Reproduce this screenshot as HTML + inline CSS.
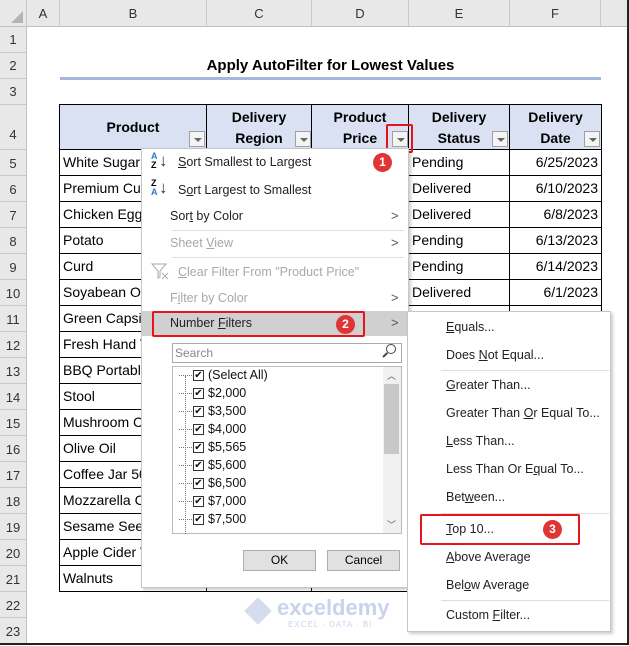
<!DOCTYPE html><html><head><style>
*{margin:0;padding:0;box-sizing:border-box}
body{width:629px;height:645px;position:relative;overflow:hidden;background:#fff;font-family:"Liberation Sans",sans-serif;font-size:13px;color:#000}
.a{position:absolute}
.ch{position:absolute;top:0;height:27px;background:#e8e8e8;border-right:1px solid #c8c8c8;border-bottom:1px solid #c0c0c0;text-align:center;line-height:27px;font-size:13px;color:#333}
.rh{position:absolute;left:0;width:27px;background:#e8e8e8;border-bottom:1px solid #c8c8c8;border-right:1px solid #c0c0c0;text-align:center;font-size:13px;color:#333}
.cell{position:absolute;border-right:1px solid #000;border-bottom:1px solid #000;line-height:25px;padding-left:3px;white-space:nowrap;overflow:hidden;font-size:14px}
.hd{position:absolute;background:#d9e1f2;border-right:1px solid #000;border-bottom:1px solid #000;font-weight:bold;text-align:center;font-size:14px;line-height:21px}
.dd{position:absolute;width:16px;height:16px;border:1px solid #a0a0a0;background:#f4f4f4}
.dd:after{content:"";position:absolute;left:4px;top:6px;border:4px solid transparent;border-top:4px solid #666}
.mi{position:absolute;left:170px;font-size:12.5px;color:#222}
.g{color:#a8a8a8}
.arr{position:absolute;left:391px;font-size:13px;color:#555}
.sep{position:absolute;height:1px;background:#ddd}
.badge{position:absolute;width:19px;height:19px;border-radius:50%;background:#e03535;color:#fff;font-weight:bold;font-size:12px;text-align:center;line-height:19px}
.red{position:absolute;border:2px solid #e8141c;border-radius:2px}
.si{position:absolute;left:446px;font-size:12.5px;color:#222}
.li{position:absolute;left:193px;font-size:12.5px;color:#111;height:16px}
.cb{position:absolute;left:0;top:1px;width:11px;height:11px;border:1px solid #333;background:#fff;font-size:10px;line-height:9px;text-align:center}
.li span.t{position:absolute;left:15px;top:-1px;white-space:nowrap}
.dot{position:absolute;left:-14px;top:6px;width:13px;border-top:1px dotted #777}
</style></head><body>
<div class="ch" style="left:0;width:27px"><div class="a" style="right:3px;bottom:3px;width:0;height:0;border-left:12px solid transparent;border-bottom:12px solid #b5b5b5"></div></div>
<div class="ch" style="left:27px;width:33px">A</div>
<div class="ch" style="left:60px;width:147px">B</div>
<div class="ch" style="left:207px;width:105px">C</div>
<div class="ch" style="left:312px;width:97px">D</div>
<div class="ch" style="left:409px;width:101px">E</div>
<div class="ch" style="left:510px;width:91px">F</div>
<div class="ch" style="left:601px;width:28px;border-right:none"></div>
<div class="rh" style="top:27px;height:26px;line-height:26px">1</div>
<div class="rh" style="top:53px;height:26px;line-height:26px">2</div>
<div class="rh" style="top:79px;height:26px;line-height:26px">3</div>
<div class="rh" style="top:105px;height:45px;line-height:60px">4</div>
<div class="rh" style="top:150px;height:26px;line-height:28px">5</div>
<div class="rh" style="top:176px;height:26px;line-height:28px">6</div>
<div class="rh" style="top:202px;height:26px;line-height:28px">7</div>
<div class="rh" style="top:228px;height:26px;line-height:28px">8</div>
<div class="rh" style="top:254px;height:26px;line-height:28px">9</div>
<div class="rh" style="top:280px;height:26px;line-height:28px">10</div>
<div class="rh" style="top:306px;height:26px;line-height:28px">11</div>
<div class="rh" style="top:332px;height:26px;line-height:28px">12</div>
<div class="rh" style="top:358px;height:26px;line-height:28px">13</div>
<div class="rh" style="top:384px;height:26px;line-height:28px">14</div>
<div class="rh" style="top:410px;height:26px;line-height:28px">15</div>
<div class="rh" style="top:436px;height:26px;line-height:28px">16</div>
<div class="rh" style="top:462px;height:26px;line-height:28px">17</div>
<div class="rh" style="top:488px;height:26px;line-height:28px">18</div>
<div class="rh" style="top:514px;height:26px;line-height:28px">19</div>
<div class="rh" style="top:540px;height:26px;line-height:28px">20</div>
<div class="rh" style="top:566px;height:26px;line-height:28px">21</div>
<div class="rh" style="top:592px;height:26px;line-height:28px">22</div>
<div class="rh" style="top:618px;height:27px;line-height:28px">23</div>
<div class="a" style="left:627px;top:0;width:2px;height:645px;background:#222"></div>
<div class="a" style="left:0;top:643px;width:629px;height:2px;background:#222"></div>
<div class="a" style="left:60px;top:57px;width:541px;text-align:center;font-weight:bold;font-size:15px">Apply AutoFilter for Lowest Values</div>
<div class="a" style="left:60px;top:77px;width:541px;height:3px;background:#a6b8d9"></div>
<div class="a" style="left:59px;top:104px;width:543px;height:1px;background:#000"></div>
<div class="a" style="left:59px;top:104px;width:1px;height:488px;background:#000"></div>
<div class="hd" style="left:60px;top:105px;width:147px;height:45px;line-height:45px">Product</div>
<div class="hd" style="left:207px;top:105px;width:105px;height:45px;padding-top:2px">Delivery<br>Region</div>
<div class="hd" style="left:312px;top:105px;width:97px;height:45px;padding-top:2px">Product<br>Price</div>
<div class="hd" style="left:409px;top:105px;width:101px;height:45px;padding-top:2px">Delivery<br>Status</div>
<div class="hd" style="left:510px;top:105px;width:92px;height:45px;padding-top:2px">Delivery<br>Date</div>
<div class="dd" style="left:189px;top:131px"></div>
<div class="dd" style="left:295px;top:131px"></div>
<div class="dd" style="left:392px;top:131px"></div>
<div class="dd" style="left:492px;top:131px"></div>
<div class="dd" style="left:584px;top:131px"></div>
<div class="red" style="left:386px;top:124px;width:27px;height:29px"></div>
<div id="rows"></div>
<script>
var P=["White Sugar","Premium Cut","Chicken Eggs","Potato","Curd","Soyabean Oil","Green Capsicum","Fresh Hand T","BBQ Portable","Stool","Mushroom C","Olive Oil","Coffee Jar 50","Mozzarella C","Sesame Seed","Apple Cider V","Walnuts"];
var S=["Pending","Delivered","Delivered","Pending","Pending","Delivered"];
var D=["6/25/2023","6/10/2023","6/8/2023","6/13/2023","6/14/2023","6/1/2023"];
var h="";
for(var i=0;i<17;i++){var t=150+26*i;
h+='<div class="cell" style="left:60px;top:'+t+'px;width:147px;height:26px">'+P[i]+'</div>';
h+='<div class="cell" style="left:207px;top:'+t+'px;width:105px;height:26px"></div>';
h+='<div class="cell" style="left:312px;top:'+t+'px;width:97px;height:26px"></div>';
h+='<div class="cell" style="left:409px;top:'+t+'px;width:101px;height:26px">'+(S[i]||'')+'</div>';
h+='<div class="cell" style="left:510px;top:'+t+'px;width:92px;height:26px;text-align:right;padding-right:3px">'+(D[i]||'')+'</div>';}
document.getElementById("rows").innerHTML=h;
</script>
<div class="a" style="left:245px;top:598px;width:26px;height:26px;background:#c9d3e8;transform:rotate(45deg) scale(.75);opacity:.8"></div>
<div class="a" style="left:277px;top:595px;font-size:22px;font-weight:bold;color:#c9d3ec">exceldemy</div>
<div class="a" style="left:288px;top:620px;font-size:8px;color:#c9d3ec;letter-spacing:1px">EXCEL · DATA · BI</div>
<div class="a" style="left:141px;top:148px;width:268px;height:440px;background:#fff;border:1px solid #c6c6c6;box-shadow:2px 2px 3px rgba(0,0,0,.2)"></div>
<div class="a" style="left:151px;top:152px;font-size:9px;font-weight:bold;line-height:9px"><span style="color:#2e75c6">A</span><br>Z</div>
<div class="a" style="left:159px;top:151px;font-size:17px;color:#333">↓</div>
<div class="a" style="left:151px;top:179px;font-size:9px;font-weight:bold;line-height:9px">Z<br><span style="color:#2e75c6">A</span></div>
<div class="a" style="left:159px;top:178px;font-size:17px;color:#333">↓</div>
<div class="mi" style="left:178px;top:155px"><u>S</u>ort Smallest to Largest</div>
<div class="mi" style="left:178px;top:183px">S<u>o</u>rt Largest to Smallest</div>
<div class="mi" style="top:209px">Sor<u>t</u> by Color</div><div class="arr" style="top:208px">&gt;</div>
<div class="sep" style="left:172px;top:230px;width:232px"></div>
<div class="mi g" style="top:236px">Sheet <u>V</u>iew</div><div class="arr g" style="top:235px">&gt;</div>
<div class="sep" style="left:172px;top:257px;width:232px"></div>
<svg class="a" style="left:151px;top:263px" width="20" height="18"><path d="M1 1H15L9 8V14L7 15V8Z" fill="none" stroke="#aaa"/><path d="M11 10L17 16M17 10L11 16" stroke="#aaa"/></svg>
<div class="mi g" style="left:178px;top:265px"><u>C</u>lear Filter From "Product Price"</div>
<div class="mi g" style="top:291px">F<u>i</u>lter by Color</div><div class="arr g" style="top:290px">&gt;</div>
<div class="a" style="left:142px;top:311px;width:266px;height:25px;background:#d0d0d0"></div>
<div class="mi" style="top:316px">Number <u>F</u>ilters</div><div class="arr" style="top:315px">&gt;</div>
<div class="red" style="left:152px;top:311px;width:213px;height:26px"></div>
<div class="a" style="left:172px;top:343px;width:230px;height:20px;border:1px solid #aaa;font-size:12px;color:#888;padding-left:2px;line-height:18px">Search</div>
<div class="a" style="left:386px;top:344px;width:10px;height:10px;border:1.5px solid #444;border-radius:50%"></div>
<div class="a" style="left:382px;top:354px;width:6px;height:1.5px;background:#444;transform:rotate(-45deg)"></div>
<div class="a" style="left:172px;top:366px;width:230px;height:168px;border:1px solid #bbb"></div>
<div class="a" style="left:185px;top:376px;height:158px;border-left:1px dotted #777"></div>
<div class="a" style="left:383px;top:367px;width:18px;height:166px;background:#f0f0f0"></div>
<div class="a" style="left:384px;top:384px;width:15px;height:70px;background:#c8c8c8"></div>
<div class="a" style="left:387px;top:369px;font-size:9px;color:#555">︿</div>
<div class="a" style="left:387px;top:518px;font-size:9px;color:#555">﹀</div>
<div id="li"></div>
<script>
var L=["(Select All)","$2,000","$3,500","$4,000","$5,565","$5,600","$6,500","$7,000","$7,500"],s="";
for(var i=0;i<L.length;i++){s+='<div class="li" style="top:'+(369+18*i)+'px"><div class="dot"></div><div class="cb">✔</div><span class="t">'+L[i]+'</span></div>';}
document.getElementById("li").innerHTML=s;
</script>
<div class="a" style="left:243px;top:550px;width:73px;height:21px;border:1px solid #adadad;background:#e1e1e1;text-align:center;line-height:19px;font-size:12px">OK</div>
<div class="a" style="left:327px;top:550px;width:73px;height:21px;border:1px solid #adadad;background:#e1e1e1;text-align:center;line-height:19px;font-size:12px">Cancel</div>
<div class="badge" style="left:373px;top:153px">1</div>
<div class="badge" style="left:336px;top:315px">2</div>
<div class="a" style="left:407px;top:311px;width:204px;height:321px;background:#fff;border:1px solid #c6c6c6;box-shadow:2px 2px 3px rgba(0,0,0,.2)"></div>
<div class="si" style="top:320px"><u>E</u>quals...</div>
<div class="si" style="top:348px">Does <u>N</u>ot Equal...</div>
<div class="sep" style="left:441px;top:370px;width:168px"></div>
<div class="si" style="top:378px"><u>G</u>reater Than...</div>
<div class="si" style="top:406px">Greater Than <u>O</u>r Equal To...</div>
<div class="si" style="top:434px"><u>L</u>ess Than...</div>
<div class="si" style="top:462px">Less Than Or E<u>q</u>ual To...</div>
<div class="si" style="top:490px">Bet<u>w</u>een...</div>
<div class="sep" style="left:441px;top:513px;width:168px"></div>
<div class="si" style="top:522px"><u>T</u>op 10...</div>
<div class="red" style="left:420px;top:514px;width:160px;height:31px"></div>
<div class="badge" style="left:543px;top:520px">3</div>
<div class="si" style="top:550px"><u>A</u>bove Average</div>
<div class="si" style="top:578px">Bel<u>o</u>w Average</div>
<div class="sep" style="left:441px;top:600px;width:168px"></div>
<div class="si" style="top:608px">Custom <u>F</u>ilter...</div>
</body></html>
